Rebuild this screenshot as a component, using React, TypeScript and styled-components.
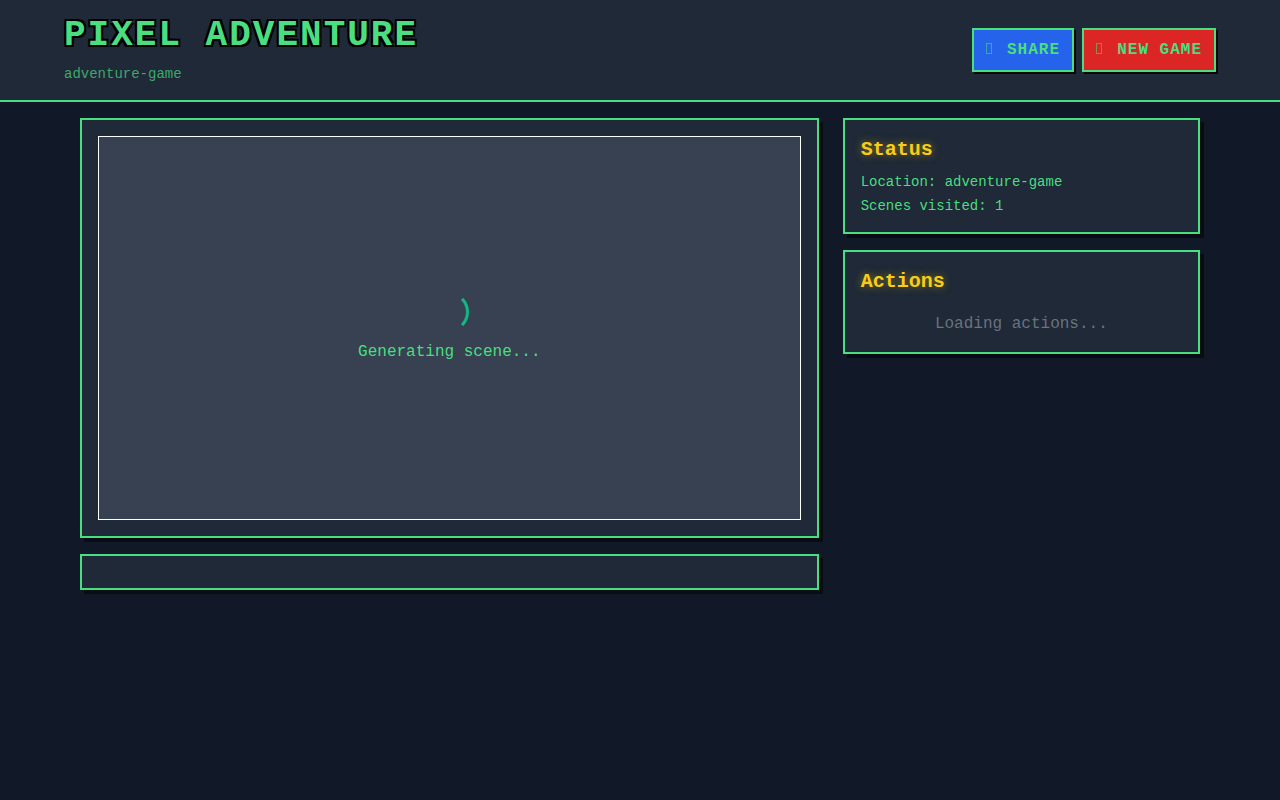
import styled, { createGlobalStyle } from "styled-components";

const GlobalStyle = createGlobalStyle`
  * {
    box-sizing: border-box;
  }
  html,
  body {
    margin: 0;
    padding: 0;
  }
  body {
    min-height: 100vh;
    background-color: #111827;
    color: #4ade80;
    font-family: "Liberation Mono", monospace;
  }
`;

function App() {
  return (
    <>
      <GlobalStyle />
      <Header>
        <HeaderInner>
          <div>
            <Title>PIXEL ADVENTURE</Title>
            <Subtitle>adventure-game</Subtitle>
          </div>
          <ButtonRow>
            <GameButton $bg="#2563eb">
              <MissingGlyph />
              SHARE
            </GameButton>
            <GameButton $bg="#dc2626">
              <MissingGlyph />
              NEW GAME
            </GameButton>
          </ButtonRow>
        </HeaderInner>
      </Header>
      <Main>
        <LeftColumn>
          <Panel>
            <SceneFrame>
              <Spinner />
              <SceneText>Generating scene...</SceneText>
            </SceneFrame>
          </Panel>
          <Panel />
        </LeftColumn>
        <RightColumn>
          <Panel>
            <PanelTitle>Status</PanelTitle>
            <StatusList>
              <StatusLine>Location: adventure-game</StatusLine>
              <StatusLine>Scenes visited: 1</StatusLine>
            </StatusList>
          </Panel>
          <Panel>
            <PanelTitle>Actions</PanelTitle>
            <LoadingActions>Loading actions...</LoadingActions>
          </Panel>
        </RightColumn>
      </Main>
    </>
  );
}

export default App;

const Header = styled.header`
  background-color: #1f2937;
  border-bottom: 2px solid #4ade80;
  padding: 16px 0;
`;

const HeaderInner = styled.div`
  display: flex;
  justify-content: space-between;
  align-items: center;
  width: 1152px;
  margin: 0 auto;
`;

const Title = styled.h1`
  margin: 0;
  font-size: 36px;
  line-height: 40px;
  font-weight: 700;
  letter-spacing: 2px;
  color: #4ade80;
  text-shadow: -2px -2px 0 #000, 2px -2px 0 #000, -2px 2px 0 #000, 2px 2px 0 #000;
`;

const Subtitle = styled.p`
  margin: 8px 0 0;
  font-size: 14px;
  line-height: 20px;
  color: #4ade80;
  opacity: 0.7;
`;

const ButtonRow = styled.div`
  display: flex;
  gap: 8px;
`;

const GameButton = styled.button<{ $bg: string }>`
  display: flex;
  align-items: center;
  height: 44px;
  padding: 0 12px;
  border: 2px solid #4ade80;
  background-color: ${({ $bg }) => $bg};
  box-shadow: 2px 2px 0 rgba(0, 0, 0, 0.8);
  color: #4ade80;
  font-family: "Liberation Mono", monospace;
  font-size: 16px;
  font-weight: 700;
  line-height: 24px;
  letter-spacing: 1px;
  cursor: pointer;
`;

// the empty box a missing emoji leaves in front of the label
const MissingGlyph = styled.span`
  flex: none;
  width: 6px;
  height: 11px;
  margin-right: 15.2px;
  margin-bottom: 3px;
  border: 1px solid rgba(74, 222, 128, 0.55);
`;

const Main = styled.main`
  display: grid;
  grid-template-columns: repeat(3, minmax(0, 1fr));
  gap: 24px;
  width: 1152px;
  margin: 0 auto;
  padding: 16px;
`;

const LeftColumn = styled.div`
  grid-column: span 2;
  display: flex;
  flex-direction: column;
  gap: 16px;
`;

const RightColumn = styled.div`
  display: flex;
  flex-direction: column;
  gap: 16px;
`;

const Panel = styled.section`
  padding: 16px;
  border: 2px solid #4ade80;
  background-color: #1f2937;
  box-shadow: 4px 4px 0 rgba(0, 0, 0, 0.5);
`;

const SceneFrame = styled.div`
  display: flex;
  flex-direction: column;
  align-items: center;
  justify-content: center;
  height: 384px;
  border: 1px solid #ffffff;
  background-color: #374151;
`;

const Spinner = styled.div`
  width: 40px;
  height: 40px;
  border: 3px solid transparent;
  border-right-color: #10b981;
  border-radius: 50%;
`;

const SceneText = styled.p`
  margin: 8px 0 0;
  font-size: 16px;
  line-height: 24px;
  color: #4ade80;
`;

const PanelTitle = styled.h2`
  margin: 0 0 8px;
  font-size: 20px;
  line-height: 28px;
  font-weight: 700;
  color: #facc15;
  text-shadow: 0 0 8px rgba(250, 204, 21, 0.5);
`;

const StatusList = styled.div`
  display: flex;
  flex-direction: column;
  gap: 4px;
`;

const StatusLine = styled.p`
  margin: 0;
  font-size: 14px;
  line-height: 20px;
  color: #4ade80;
`;

const LoadingActions = styled.div`
  padding-top: 8px;
  font-size: 16px;
  line-height: 24px;
  text-align: center;
  color: #6b7280;
`;
